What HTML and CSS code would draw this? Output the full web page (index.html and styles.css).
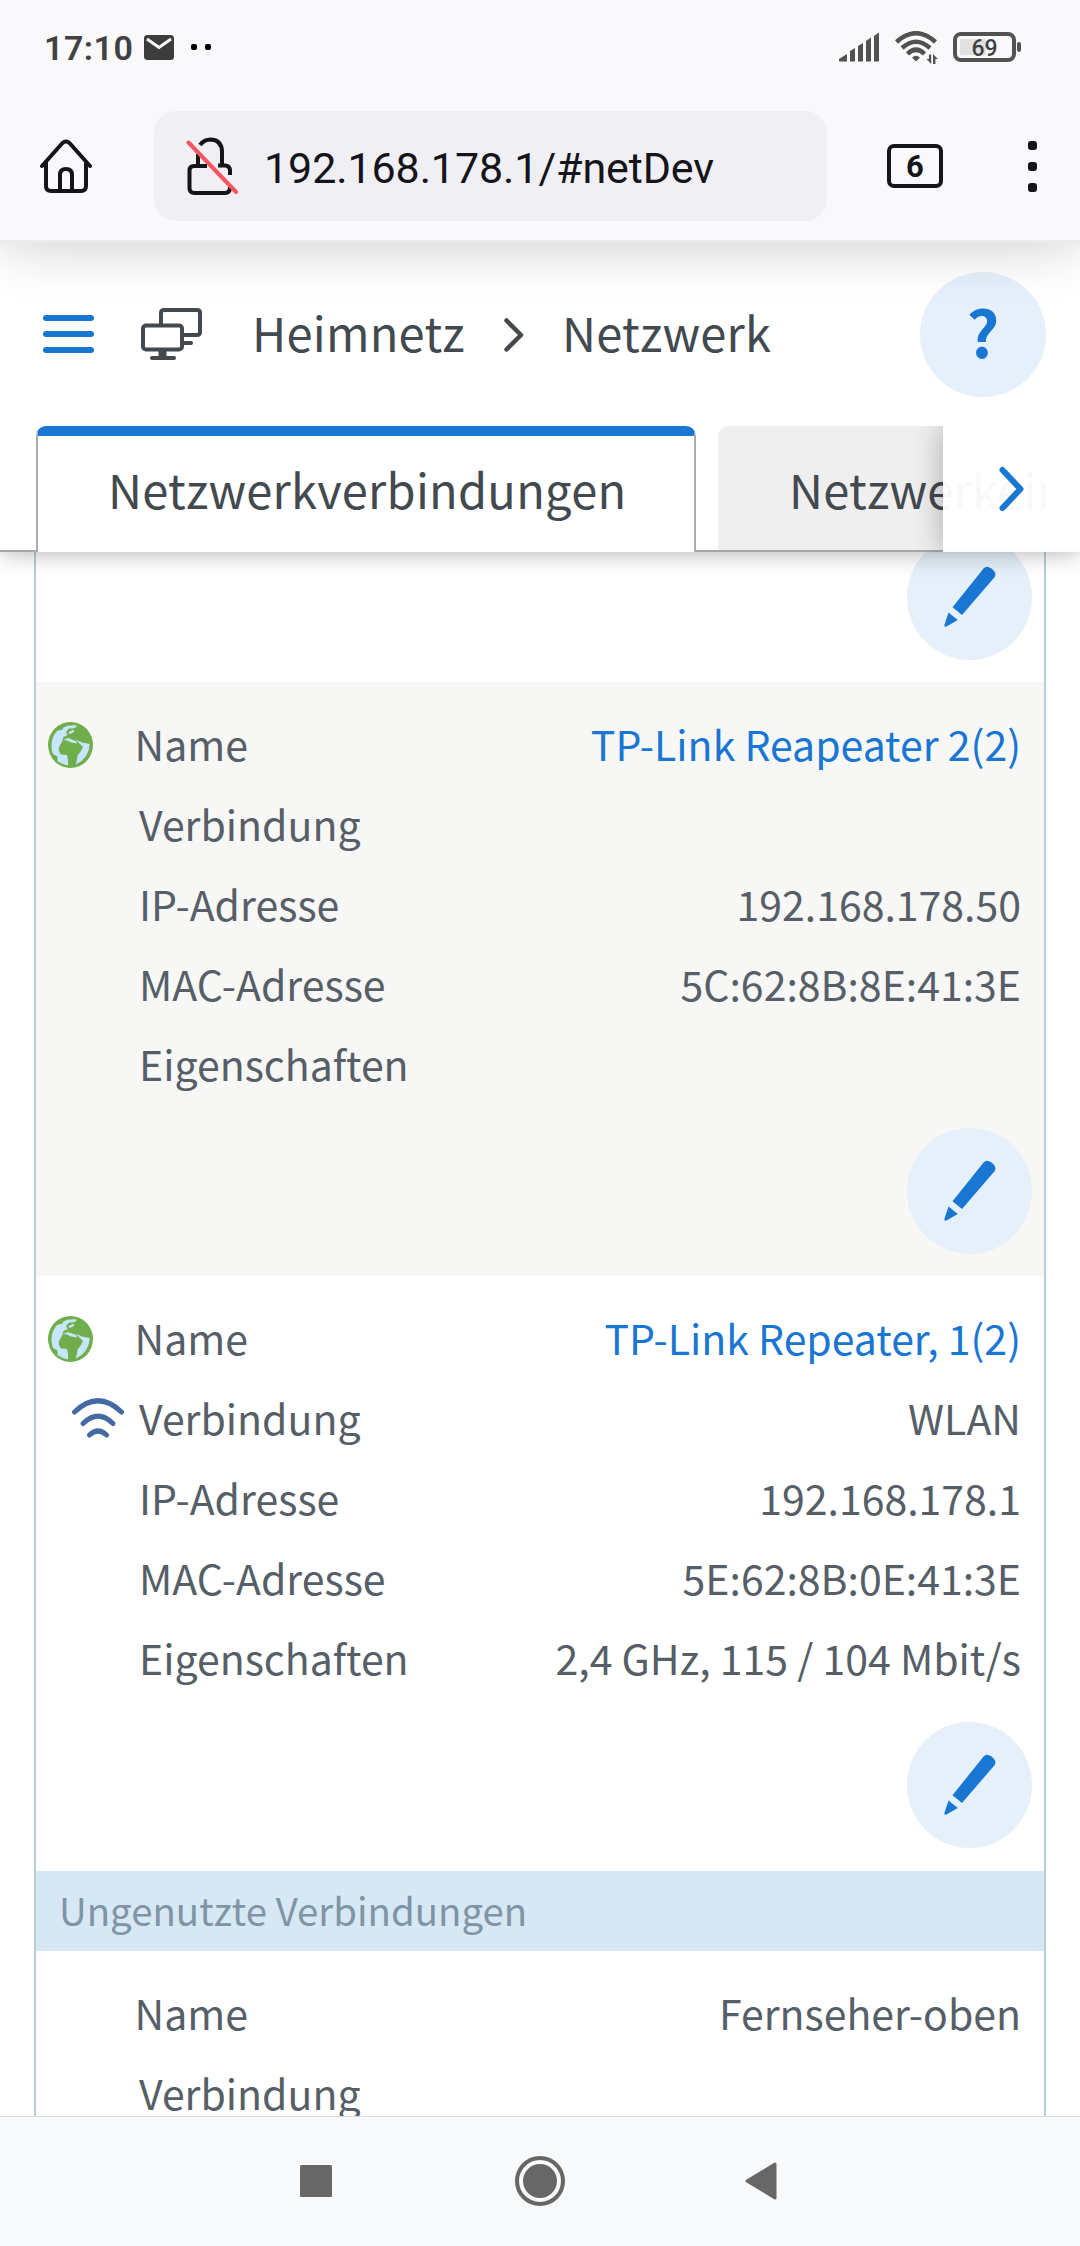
FILE: index.html
```html
<!DOCTYPE html>
<html lang="de">
<head>
    <meta charset="UTF-8">
    <meta name="viewport" content="width=device-width, initial-scale=1.0">
    <title>Heimnetz - Netzwerk</title>
    <link rel="stylesheet" href="styles.css">
</head>
<body>
    <!-- shared icons -->
    <svg class="sprite" width="0" height="0">
        <symbol id="pencil" viewBox="0 0 52 62">
            <path d="M39.600 2.500 Q42.500 -1 47 2.200 Q53.500 7 50.500 11.200 L18 49 L8.500 41.200 Z"/>
            <path d="M4.500 46.500 L13.800 54 L2 60.800 Q0 61 .4 59 Z"/>
        </symbol>
        <symbol id="globe" viewBox="0 0 45 46">
            <ellipse cx="22.500" cy="23" rx="22.500" ry="23" fill="#70ad4b"/>
            <g fill="#c6e6fd">
                <path d="M28.500 3.300 Q20 2.500 15.500 5.500 L14.500 7.500 L9 9 Q3.500 15 3.500 24 Q3.500 28 5 32 L9.500 34.500 L9.500 39 Q14 42.500 20 43.500 L20 38 L19 33 L13 32.500 Q10 29 11 25 L14 20 L15.500 15 L19.500 13 L18 10 L21 6.500 L25 6.500 L28.500 5 Z"/>
                <path d="M15 18 L20 16 L28 19 L29 21.500 L23 20.500 L19 18.500 Z"/>
                <path d="M20 10.500 L25.500 7.500 L26 10 L22 12 Z"/>
                <path d="M27.500 42.500 L29 38 L29.500 33.500 L33 29 L35 25 L32 22 L27.500 17.500 L34 20.500 L41.800 22 Q40.500 37 27.500 42.500 Z"/>
            </g>
        </symbol>
    </svg>

    <div class="status-bar">
        <span class="clock">17:10</span>
        <svg class="mail" width="30" height="25" viewBox="0 0 30 25">
            <rect width="30" height="25" rx="3.500" fill="#3c3c3c"/>
            <path d="M3 4 L15 12.500 L27 4" fill="none" stroke="#fff" stroke-width="3"/>
        </svg>
        <span class="dots"><i></i><i></i></span>
        <svg class="signal" width="41" height="30" viewBox="0 0 41 30" fill="#525252">
            <path d="M0 29.500 V27 L8 22 V29.500 Z"/>
            <path d="M11 29.500 V19 L16 16 V29.500 Z"/>
            <path d="M19 29.500 V14 L24 11 V29.500 Z"/>
            <path d="M27 29.500 V9 L32 5.500 V29.500 Z"/>
            <path d="M35 29.500 V4 L40 .5 V29.500 Z"/>
        </svg>
        <svg class="wifi" width="44" height="34" viewBox="0 0 44 34">
            <g fill="none" stroke="#525252" stroke-width="4.500">
                <path d="M1.500 11 Q21 -6.500 40.500 11"/>
                <path d="M7 17 Q21 4.500 35 17"/>
                <path d="M12.500 23 Q21 14.500 29.500 23"/>
            </g>
            <path fill="#525252" d="M17 26.500 Q21 23 25 26.500 L21 30.500 Z"/>
            <path fill="#525252" d="M34 23.500 h2.200 v9.500 l-4.700 -5 h2.500 Z M38 33 V23 l5 5 h-2.600 v5 Z"/>
        </svg>
        <div class="battery"><span>69</span></div>
    </div>

    <div class="browser-bar">
        <svg class="home" width="54" height="56" viewBox="0 0 54 56" fill="none" stroke="#15141a" stroke-width="4" stroke-linecap="round" stroke-linejoin="round">
            <path d="M3 28 L23.500 5 Q27 2 30.500 5 L51 28"/>
            <path d="M7 25 V48 Q7 53 12 53 H42 Q47 53 47 48 V25"/>
            <path d="M21 52 V37 Q21 31 27 31 Q33 31 33 37 V52"/>
        </svg>
        <div class="url-bar">
            <svg width="54" height="58" viewBox="0 0 54 58" fill="none" stroke="#15141a" stroke-width="4">
                <path d="M14 8 Q18 2.500 24.500 2.500 Q36 3 36 15 V28"/>
                <path d="M12 17 V28"/>
                <path d="M21 29 H8 Q3.500 29 3.500 33.500 V51 Q3.500 56 8.500 56 H39 Q44 56 44 50"/>
                <path d="M32 28.500 H39 Q44 28.500 44 34 V38"/>
                <path d="M2.500 5.500 L50 55" stroke="#f7545f" stroke-linecap="round"/>
            </svg>
            <span>192.168.178.1/#netDev</span>
        </div>
        <div class="tab-count">6</div>
        <div class="menu-dots"><i></i><i></i><i></i></div>
    </div>

    <div class="page">
        <div class="page-head">
            <div class="head-shadow"></div>
            <div class="breadcrumb">
                <div class="burger"><i></i><i></i><i></i></div>
                <svg class="devices" width="61" height="53" viewBox="0 0 61 53" fill="none" stroke="#42494f" stroke-width="4">
                    <path d="M20 16 V5 Q20 2 23 2 H56 Q59 2 59 5 V24 Q59 27 56 27 H43"/>
                    <rect x="2" y="17.500" width="39" height="24" rx="3"/>
                    <path d="M42 35 H50" stroke-linecap="round"/>
                    <path d="M21.500 42 V50" stroke-width="8"/>
                    <path d="M11 50 H33" stroke-linecap="round"/>
                </svg>
                <span class="crumb">Heimnetz</span>
                <svg class="sep" width="20" height="34" viewBox="0 0 20 34" fill="none" stroke="#42494f" stroke-width="4.500" stroke-linecap="round" stroke-linejoin="round">
                    <path d="M2.500 2.500 L17 17 L2.500 31.500"/>
                </svg>
                <span class="crumb">Netzwerk</span>
                <div class="help">?</div>
            </div>
            <div class="tabs">
                <div class="tab active">Netzwerkverbindungen</div>
                <div class="tab next">Netzwerkeinstellungen</div>
                <div class="tab-next">
                    <svg width="26" height="46" viewBox="0 0 26 46" fill="none" stroke="#1976d2" stroke-width="6" stroke-linecap="round" stroke-linejoin="round">
                        <path d="M3.500 4 L21.500 23 L3.500 42"/>
                    </svg>
                </div>
            </div>
        </div>

        <div class="device-list">
            <div class="device first">
                <div class="edit"><svg width="52" height="62"><use href="#pencil"/></svg></div>
            </div>
            <div class="device grey">
                <div class="row name">
                    <svg class="globe" width="45" height="46"><use href="#globe"/></svg>
                    <label>Name</label><a>TP-Link Reapeater 2(2)</a>
                </div>
                <div class="row"><label>Verbindung</label></div>
                <div class="row"><label>IP-Adresse</label><span>192.168.178.50</span></div>
                <div class="row"><label>MAC-Adresse</label><span>5C:62:8B:8E:41:3E</span></div>
                <div class="row"><label>Eigenschaften</label></div>
                <div class="edit"><svg width="52" height="62"><use href="#pencil"/></svg></div>
            </div>
            <div class="device">
                <div class="row name">
                    <svg class="globe" width="45" height="46"><use href="#globe"/></svg>
                    <label>Name</label><a>TP-Link Repeater, 1(2)</a>
                </div>
                <div class="row">
                    <svg class="wlan" width="52" height="40" viewBox="0 0 52 40" fill="none" stroke="#4469a3" stroke-width="5" stroke-linecap="round">
                        <path d="M2.500 14 Q26 -8.500 49.500 14"/>
                        <path d="M11 25.500 Q26 10.500 41 25.500"/>
                        <path d="M17.500 37 Q26 29 34.500 37"/>
                    </svg>
                    <label>Verbindung</label><span>WLAN</span>
                </div>
                <div class="row"><label>IP-Adresse</label><span>192.168.178.1</span></div>
                <div class="row"><label>MAC-Adresse</label><span>5E:62:8B:0E:41:3E</span></div>
                <div class="row"><label>Eigenschaften</label><span>2,4 GHz, 115 / 104 Mbit/s</span></div>
                <div class="edit"><svg width="52" height="62"><use href="#pencil"/></svg></div>
            </div>
            <div class="section-title">Ungenutzte Verbindungen</div>
            <div class="device">
                <div class="row name"><label>Name</label><span>Fernseher-oben</span></div>
                <div class="row"><label>Verbindung</label></div>
            </div>
        </div>
    </div>

    <div class="nav-bar">
        <svg width="32" height="32"><rect width="32" height="32" rx="1.500" fill="#676767"/></svg>
        <svg width="50" height="50" viewBox="0 0 50 50">
            <circle cx="25" cy="25" r="23" fill="none" stroke="#676767" stroke-width="4"/>
            <circle cx="25" cy="25" r="17" fill="#676767"/>
        </svg>
        <svg width="32" height="38" viewBox="0 0 32 38"><path d="M2 19 L30 2 V36 Z" fill="#676767" stroke="#676767" stroke-width="3" stroke-linejoin="round"/></svg>
    </div>
</body>
</html>
```

FILE: styles.css
```css
* {
    box-sizing: border-box;
}
body {
    margin: 0;
    height: 2246px;
    overflow: hidden;
    display: flex;
    flex-direction: column;
    background: #fff;
    color: #565f68;
    font-family: "Noto Sans CJK SC", "Noto Sans", sans-serif;
    font-size: 41px;
}
svg {
    display: block;
    flex: none;
}
.sprite {
    position: absolute;
}

/* android status bar */
.status-bar {
    height: 94px;
    flex: none;
    display: flex;
    align-items: center;
    padding: 0 58px 0 44px;
    background: #f9f9fb;
    font-family: Roboto, sans-serif;
}
.clock {
    width: 100px;
    font-size: 34px;
    font-weight: 600;
    letter-spacing: 0.5px;
    line-height: 40px;
    color: #414141;
    padding-top: 2px;
}
.dots {
    display: flex;
    gap: 8px;
    margin-left: 17px;
}
.dots i {
    width: 6px;
    height: 6px;
    border-radius: 2px;
    background: #000;
}
.signal {
    margin-left: auto;
}
.wifi {
    margin: 2px 0 0 15px;
}
.battery {
    position: relative;
    width: 63px;
    height: 30px;
    margin: 0 6px 0 14px;
    border: 4px solid #525252;
    border-radius: 8px;
    background: linear-gradient(#e1e1e1, #e1e1e1) 3px 3px / 26px 16px no-repeat;
    text-align: center;
    font-size: 23px;
    font-weight: 500;
    line-height: 25px;
    color: #414141;
}
.battery::after {
    content: "";
    position: absolute;
    left: 60px;
    top: 6px;
    width: 4px;
    height: 10px;
    border-radius: 2px;
    background: #525252;
}

/* browser toolbar */
.browser-bar {
    height: 146px;
    flex: none;
    display: flex;
    align-items: center;
    padding: 0 43px 2px 39px;
    background: #f9f9fb;
    font-family: Roboto, sans-serif;
    color: #15141a;
}
.url-bar {
    width: 673px;
    height: 110px;
    margin: 0 60px 0 61px;
    padding-left: 32px;
    display: flex;
    align-items: center;
    gap: 24px;
    border-radius: 22px;
    background: #f0eff4;
    font-size: 43px;
    letter-spacing: -0.1px;
}
.url-bar span {
    padding-top: 4px;
}
.tab-count {
    width: 56px;
    height: 44px;
    border: 4px solid #15141a;
    border-radius: 7px;
    text-align: center;
    font-size: 31px;
    font-weight: 700;
    line-height: 37px;
}
.menu-dots {
    margin-left: auto;
    display: grid;
    gap: 12px;
}
.menu-dots i {
    width: 9px;
    height: 9px;
    border-radius: 3px;
    background: #15141a;
}

/* router page */
.page {
    flex: 1;
    min-height: 0;
    overflow: hidden;
    border-top: 3px solid #ebebec;
}
.page-head {
    position: relative;
    z-index: 1;
    height: 309px;
    background: #fff;
    box-shadow: 0 0 24px rgba(0, 0, 0, 0.32);
    color: #42494f;
    font-size: 47px;
    letter-spacing: 0.25px;
}
.head-shadow {
    position: absolute;
    z-index: 2;
    left: 0;
    right: 0;
    top: 0;
    height: 90px;
    overflow: hidden;
}
.head-shadow::before {
    content: "";
    position: absolute;
    left: 0;
    right: 0;
    top: -100px;
    height: 100px;
    box-shadow: 0 0 60px rgba(0, 0, 0, 0.22);
}
.breadcrumb {
    height: 183px;
    display: flex;
    align-items: center;
    padding: 0 34px 0 43px;
}
.burger {
    display: grid;
    gap: 10px;
    margin-right: 47px;
    padding-bottom: 1px;
}
.burger i {
    width: 51px;
    height: 6px;
    border-radius: 3px;
    background: #1976d2;
}
.devices {
    margin-right: 50px;
}
.crumb {
    line-height: 70px;
    padding-bottom: 5px;
}
.sep {
    margin: 0 38px 0 39px;
}
.help {
    margin-left: auto;
    width: 126px;
    height: 125px;
    border-radius: 50%;
    background: #e5f0fa;
    color: #1976d2;
    font-size: 64px;
    font-weight: 700;
    line-height: 117px;
    text-align: center;
}
.tabs {
    position: relative;
    height: 126px;
    display: flex;
    gap: 22px;
    padding-left: 36px;
    overflow: hidden;
    background: linear-gradient(#a4a6a8, #a4a6a8) bottom / 100% 2px no-repeat;
}
.tab {
    flex: none;
    padding: 0 0 0 71px;
    height: 124px;
    line-height: 125px;
    border-radius: 10px 10px 0 0;
    background: #efefef;
}
.tab.next {
    width: 328px;
    overflow: hidden;
    border-top-right-radius: 0;
}
.tab.active {
    width: 660px;
    height: 126px;
    padding: 0 0 0 70px;
    line-height: 105px;
    border: 2px solid #a9abad;
    border-top: 10px solid #1976d2;
    border-bottom: 0;
    background: #fff;
}
.tab-next {
    position: absolute;
    right: 0;
    top: 0;
    width: 137px;
    height: 126px;
    padding: 40px 0 0 56px;
    background: rgba(255, 255, 255, 0.96);
    box-shadow: 0 0 28px rgba(0, 0, 0, 0.3);
}

/* device table */
.device-list {
    margin: 0 34px;
    border: 2px solid #b9cdd5;
    border-width: 0 2px;
}
.device {
    padding: 24px 12px 22px 0;
}
.device.first {
    margin-top: -18px;
    padding-top: 0;
}
.device.grey {
    background: #f7f7f5;
}
.row {
    position: relative;
    display: flex;
    justify-content: space-between;
    height: 80px;
    line-height: 74px;
    padding: 0 11px 0 103px;
}
.row.name {
    padding-left: 98.5px;
}
.row a {
    color: #1976d2;
}
.globe {
    position: absolute;
    left: 12px;
    top: 16px;
}
.wlan {
    position: absolute;
    left: 36px;
    top: 18px;
}
.edit {
    width: 125px;
    height: 126px;
    margin: 22px 0 0 auto;
    padding: 32px 0 0 37px;
    border-radius: 50%;
    background: #e5f0fa;
    fill: #1976d2;
}
.device.first .edit {
    margin-top: 0;
}
.section-title {
    height: 80px;
    margin-top: 1px;
    padding-left: 23px;
    line-height: 76px;
    font-size: 38.4px;
    color: #8094a5;
    background: #d7e8f5;
}

/* android navigation */
.nav-bar {
    height: 130px;
    flex: none;
    display: flex;
    align-items: center;
    padding: 0 0 2px 300px;
    border-top: 1px solid #dcdcdd;
    background: #f8f9fb;
}
.nav-bar svg:nth-child(2) {
    margin: 0 180px 0 183px;
}
```
